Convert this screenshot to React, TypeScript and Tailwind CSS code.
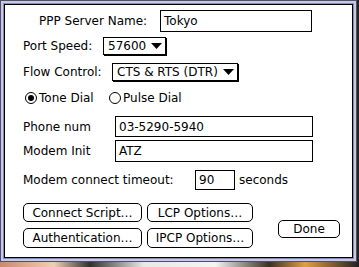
import React from "react";

function Field({ w, h, value }: { w: string; h: string; value?: string }) {
  return (
    <div className={`${w} ${h} shrink-0 border border-black bg-white flex items-center pl-[3px]`}>
      <span className="whitespace-nowrap">{value}</span>
    </div>
  );
}

function Arrow() {
  return (
    <svg width="11" height="6" viewBox="0 0 11 6" className="shrink-0">
      <polygon points="0,0 11,0 5.5,6" fill="#000" />
    </svg>
  );
}

function Popup({ w, value }: { w: string; value: string }) {
  return (
    <div className={`${w} h-[18px] shrink-0 border border-black bg-white shadow-[1px_1px_0_#000] flex items-center justify-between pl-[4px] pr-[3px]`}>
      <span className="whitespace-nowrap">{value}</span>
      <Arrow />
    </div>
  );
}

function Radio({ on }: { on?: boolean }) {
  return (
    <div className="w-[12px] h-[12px] rounded-full border border-black bg-white flex items-center justify-center shrink-0">
      {on && <div className="w-[6px] h-[6px] rounded-full bg-black" />}
    </div>
  );
}

function Btn({ w, h, label }: { w: string; h: string; label: string }) {
  return (
    <div className={`${w} ${h} shrink-0 border border-black rounded-[5px] bg-white flex items-center justify-center whitespace-nowrap`}>
      {label}
    </div>
  );
}

function Label({ w, children }: { w: string; children: React.ReactNode }) {
  return <span className={`${w} shrink-0 whitespace-nowrap`}>{children}</span>;
}

export default function App() {
  return (
    <div className="w-[359px] h-[267px] overflow-hidden bg-[linear-gradient(90deg,#c98a6a,#f0d0b0_15%,#303030_25%,#e8e8e8_40%,#f4f4f4_60%,#3a3020_75%,#e0a040_85%,#202020)] font-['DejaVu_Sans',sans-serif] text-[12px] leading-none text-black">
      <div className="w-[357px] h-[262px] border border-[#50505e] bg-[#c8c8ee]">
        <div className="w-full h-full border-2 border-[#c8c8ee]">
          <div className="w-full h-full border border-[#8a8aaa]">
            <div className="w-full h-full border border-black bg-white flex flex-col">
              {/* Row 1 */}
              <div className="flex items-center mt-[5px] pl-[34px] h-[22px]">
                <Label w="w-[121px]">PPP Server Name:</Label>
                <Field w="w-[152px]" h="h-[22px]" value="Tokyo" />
              </div>
              {/* Row 2 */}
              <div className="flex items-center mt-[5px] pl-[18px] h-[18px]">
                <Label w="w-[80px]">Port Speed:</Label>
                <Popup w="w-[63px]" value="57600" />
              </div>
              {/* Row 3 */}
              <div className="flex items-center mt-[8px] pl-[18px] h-[18px]">
                <Label w="w-[89px]">Flow Control:</Label>
                <Popup w="w-[126px]" value="CTS & RTS (DTR)" />
              </div>
              {/* Radios */}
              <div className="flex items-center mt-[11px] pl-[20px] h-[12px]">
                <div className="w-[84px] shrink-0 flex items-center gap-[2px]">
                  <Radio on />
                  <span className="whitespace-nowrap">Tone Dial</span>
                </div>
                <div className="flex items-center gap-[2px]">
                  <Radio />
                  <span className="whitespace-nowrap">Pulse Dial</span>
                </div>
              </div>
              {/* Phone */}
              <div className="flex items-center mt-[12px] pl-[18px] h-[21px]">
                <Label w="w-[92px]">Phone num</Label>
                <Field w="w-[198px]" h="h-[21px]" value="03-5290-5940" />
              </div>
              <div className="flex items-center mt-[3px] pl-[18px] h-[22px]">
                <Label w="w-[92px]">Modem Init</Label>
                <Field w="w-[198px]" h="h-[22px]" value="ATZ" />
              </div>
              {/* Timeout */}
              <div className="flex items-center mt-[8px] pl-[18px] h-[20px]">
                <Label w="w-[172px]">Modem connect timeout:</Label>
                <Field w="w-[40px]" h="h-[20px]" value="90" />
                <span className="ml-[4px] whitespace-nowrap">seconds</span>
              </div>
              {/* Buttons */}
              <div className="flex mt-[13px] pl-[18px]">
                <div className="flex flex-col gap-[6px] w-[119px] shrink-0">
                  <Btn w="w-[119px]" h="h-[19px]" label="Connect Script…" />
                  <Btn w="w-[119px]" h="h-[20px]" label="Authentication…" />
                </div>
                <div className="flex flex-col gap-[6px] ml-[5px] w-[106px] shrink-0">
                  <Btn w="w-[106px]" h="h-[19px]" label="LCP Options…" />
                  <Btn w="w-[106px]" h="h-[20px]" label="IPCP Options…" />
                </div>
                <div className="ml-[25px] mt-[17px]">
                  <Btn w="w-[62px]" h="h-[18px]" label="Done" />
                </div>
              </div>
            </div>
          </div>
        </div>
      </div>
    </div>
  );
}
